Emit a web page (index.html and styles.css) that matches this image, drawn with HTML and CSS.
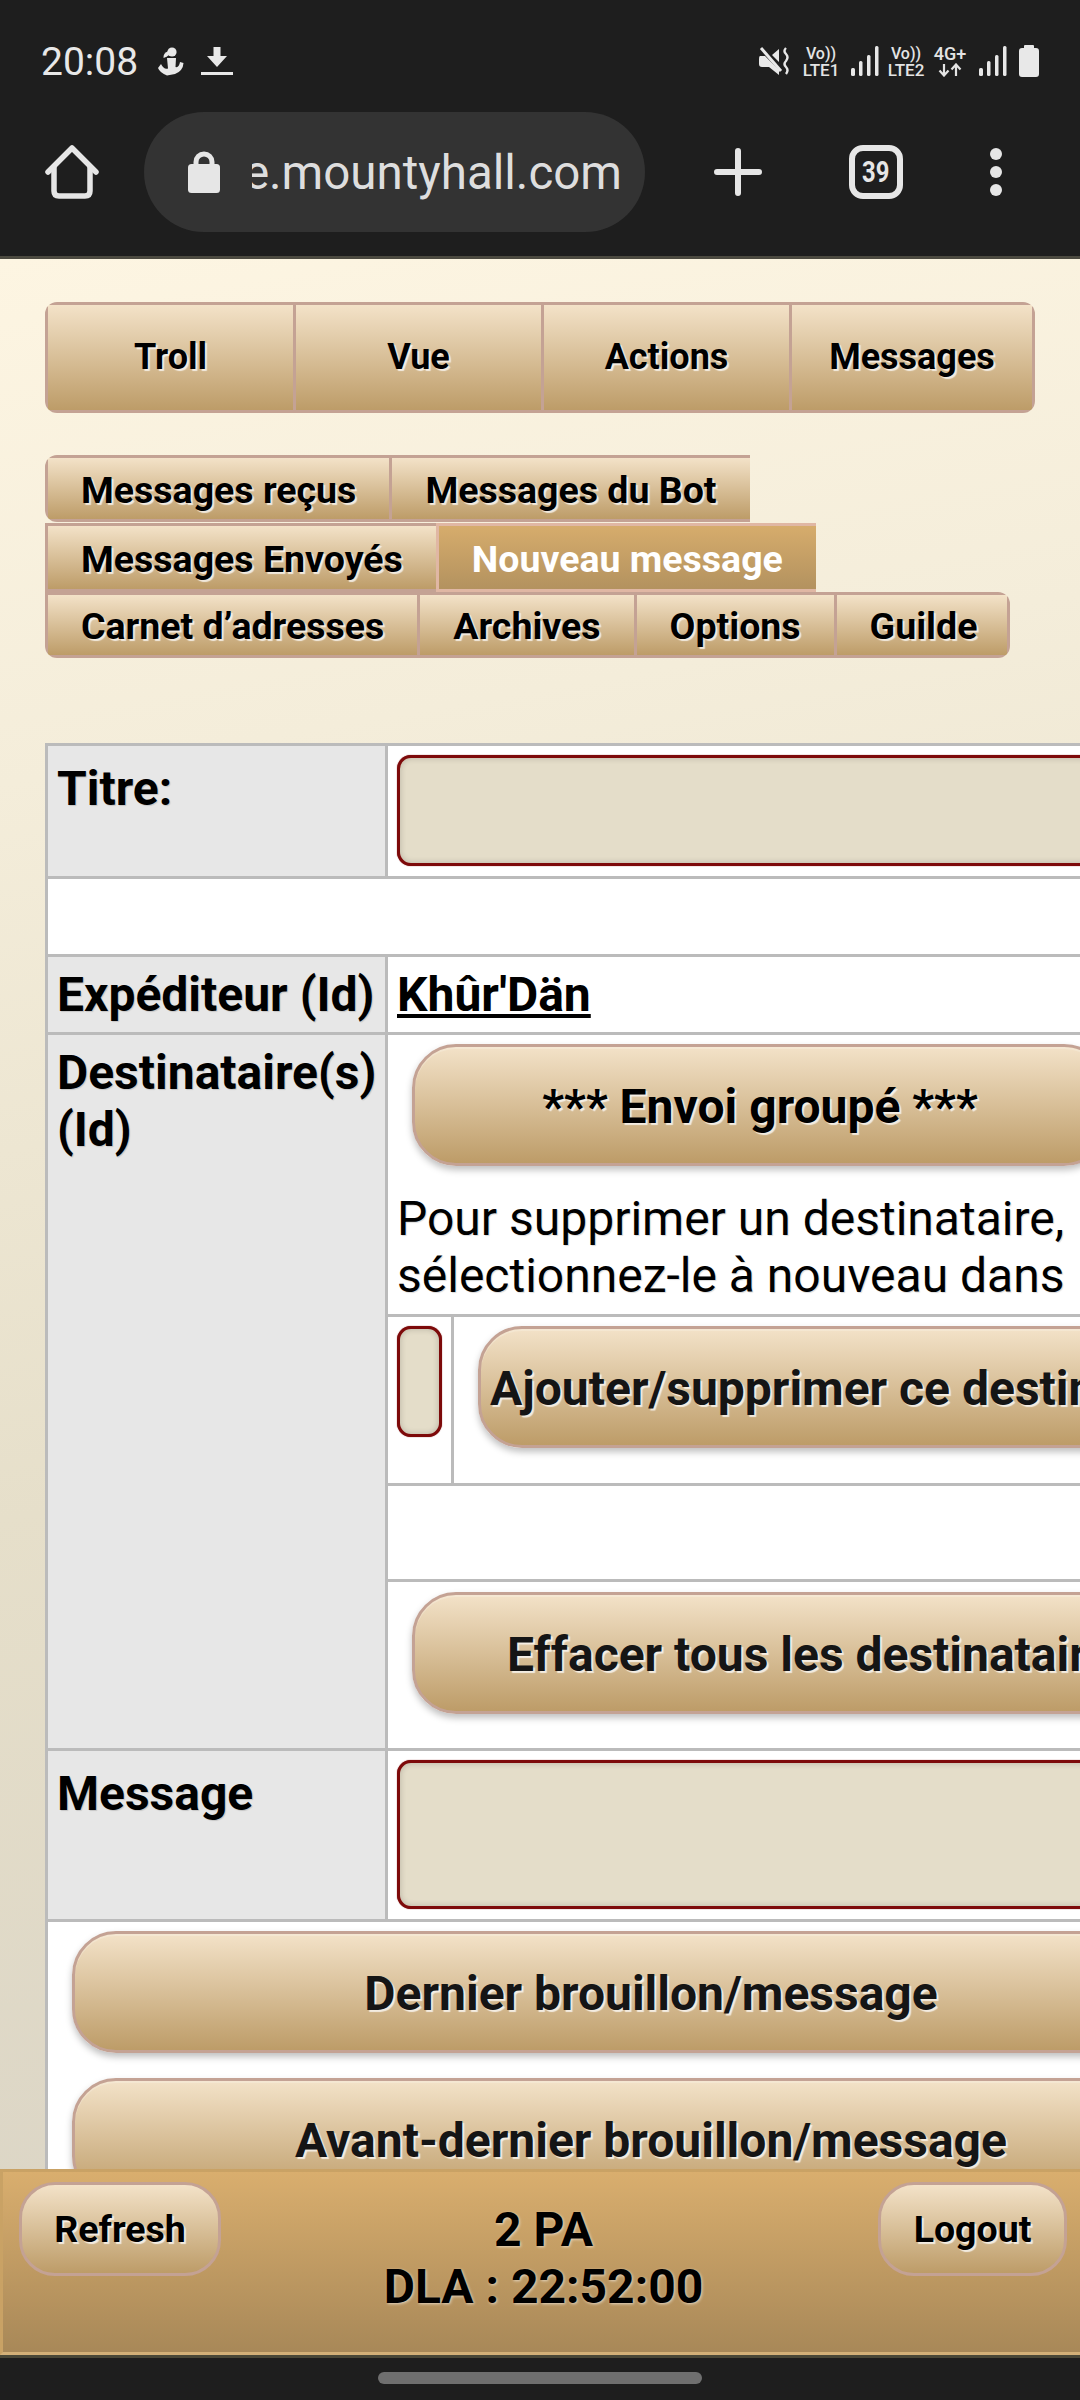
FILE: index.html
```html
<!DOCTYPE html>
<html lang="fr">
<head>
<meta charset="utf-8">
<title>Nouveau message</title>
<link rel="stylesheet" href="styles.css">
</head>
<body>
<header class="chrome">
  <div class="status">
    <span class="time">20:08</span>
    <svg class="ic-fig" viewBox="0 0 26 29" width="26" height="29"><circle cx="14" cy="5" r="4.600" fill="#e8e8e8"/><path d="M10.500 4 Q5 6 5.500 11 Q9 10 11 8Z" fill="#e8e8e8"/><path d="M9 11 H18 L17.500 20 Q21 21 22 15 L25.500 16 Q25 24 17 27 L9 28.500 Q2 26 0 21 L3 17 Q6 23 10 21.500Z" fill="#e8e8e8"/></svg>
    <svg class="ic-dl" viewBox="0 0 32 28" width="32" height="28"><path d="M12.500 0 H19.500 V9 H26 L16 20 L6 9 H12.500Z" fill="#e8e8e8"/><rect y="25" width="32" height="3" fill="#e8e8e8"/></svg>
    <span class="status-right">
      <svg class="ic-mute" viewBox="0 0 30 28" width="30" height="28"><path d="M1 9 H6 L20 23 V28 L10 20 H3 Q0 20 0 17 V12 Q0 9 1 9Z M13 8 L20 2 V15Z" fill="#e8e8e8"/><path d="M2 1 L22 24" stroke="#e8e8e8" stroke-width="3"/><path d="M27 1 Q24 4 27 7 Q30 10 27 14 Q24 17 27 20 Q30 23 27 27" fill="none" stroke="#e8e8e8" stroke-width="2.400"/></svg>
      <span class="net net-a"><span class="net-top">Vo))</span><span>LTE1</span></span>
      <svg class="ic-sig" viewBox="0 0 28 30" width="28" height="30"><rect x="0" y="22" width="4" height="8" rx="1.500" fill="#e8e8e8"/><rect x="8" y="15" width="3.500" height="15" rx="1.500" fill="#e8e8e8"/><rect x="16" y="9" width="3.500" height="21" rx="1.500" fill="#e8e8e8"/><rect x="24" y="0" width="3.500" height="30" rx="1.500" fill="#e8e8e8"/></svg>
      <span class="net net-b"><span class="net-top">Vo))</span><span>LTE2</span></span>
      <span class="net net-c"><span>4G+</span><svg class="ic-arrows" viewBox="0 0 24 14" width="24" height="14"><path d="M6 1 V12 M1.500 7.500 L6 12.500 L10.500 7.500 M18 13 V2 M13.500 6.500 L18 1.500 L22.500 6.500" fill="none" stroke="#e4e4e4" stroke-width="2.200"/></svg></span>
      <svg class="ic-sig2" viewBox="0 0 28 30" width="28" height="30"><rect x="0" y="22" width="4" height="8" rx="1.500" fill="#e8e8e8"/><rect x="8" y="15" width="3.500" height="15" rx="1.500" fill="#e8e8e8"/><rect x="16" y="9" width="3.500" height="21" rx="1.500" fill="#e8e8e8"/><rect x="24" y="0" width="3.500" height="30" rx="1.500" fill="#e8e8e8"/></svg>
      <svg class="ic-bat" viewBox="0 0 20 32" width="20" height="32"><path d="M6 0 H14 Q15 0 15 1 V3 H17 Q20 3 20 6 V29 Q20 32 17 32 H3 Q0 32 0 29 V6 Q0 3 3 3 H5 V1 Q5 0 6 0Z" fill="#e8e8e8"/></svg>
    </span>
  </div>
  <div class="toolbar">
    <svg class="ic-home" viewBox="0 0 54 54" width="54" height="54"><path d="M3 27 L27 3 L51 27" fill="none" stroke="#e6e6e6" stroke-width="5.500" stroke-linecap="round" stroke-linejoin="round"/><path d="M9 22 V46 Q9 51 14 51 H40 Q45 51 45 46 V22" fill="none" stroke="#e6e6e6" stroke-width="5.500"/></svg>
    <div class="pill">
      <svg class="ic-lock" viewBox="0 0 32 42" width="32" height="42"><path d="M8 16 V11 A8 8 0 0 1 24 11 V16" fill="none" stroke="#e6e6e6" stroke-width="5"/><rect y="13" width="32" height="29" rx="3.500" fill="#e6e6e6"/></svg>
      <div class="url"><span>e.mountyhall.com</span></div>
    </div>
    <svg class="ic-plus" viewBox="0 0 48 48" width="48" height="48"><path d="M24 3 V45 M3 24 H45" stroke="#e6e6e6" stroke-width="6" stroke-linecap="round"/></svg>
    <div class="tabcount"><span>39</span></div>
    <svg class="ic-dots" viewBox="0 0 12 48" width="12" height="48"><circle cx="6" cy="6" r="6" fill="#e6e6e6"/><circle cx="6" cy="24" r="6" fill="#e6e6e6"/><circle cx="6" cy="42" r="6" fill="#e6e6e6"/></svg>
  </div>
</header>

<main class="page">
  <nav class="nav">
    <a class="nav-item">Troll</a>
    <a class="nav-item">Vue</a>
    <a class="nav-item">Actions</a>
    <a class="nav-item">Messages</a>
  </nav>

  <div class="tabs">
    <div class="tabrow row-one">
      <a class="tab">Messages reçus</a>
      <a class="tab">Messages du Bot</a>
    </div>
    <div class="tabrow row-two">
      <a class="tab">Messages Envoyés</a>
      <a class="tab tab-active">Nouveau message</a>
    </div>
    <div class="tabrow row-three">
      <a class="tab">Carnet d’adresses</a>
      <a class="tab">Archives</a>
      <a class="tab">Options</a>
      <a class="tab">Guilde</a>
    </div>
  </div>

  <table class="form">
    <colgroup><col class="col-label"><col class="col-value"></colgroup>
    <tr>
      <th class="label label-low">Titre:</th>
      <td class="pad"><input class="field field-title" type="text"></td>
    </tr>
    <tr><td class="blank" colspan="2"></td></tr>
    <tr>
      <th class="label">Expéditeur (Id)</th>
      <td class="sender"><a class="sender-link">Khûr'Dän</a></td>
    </tr>
    <tr>
      <th class="label" rowspan="4">Destinataire(s) (Id)</th>
      <td class="recipients">
        <button class="btn btn-group" type="button">*** Envoi groupé ***</button>
        <p class="hint">Pour supprimer un destinataire,<br>sélectionnez-le à nouveau dans</p>
      </td>
    </tr>
    <tr>
      <td class="picker-cell">
        <div class="picker">
          <div class="picker-input"><input class="field field-id" type="text"></div>
          <div class="picker-action"><button class="btn btn-add" type="button">Ajouter/supprimer ce destinataire</button></div>
        </div>
      </td>
    </tr>
    <tr><td class="blank-sub"></td></tr>
    <tr>
      <td class="clear-cell"><button class="btn btn-clear" type="button">Effacer tous les destinataires</button></td>
    </tr>
    <tr>
      <th class="label label-low">Message</th>
      <td class="pad"><textarea class="field field-message"></textarea></td>
    </tr>
    <tr>
      <td class="drafts" colspan="2">
        <button class="btn btn-draft" type="button">Dernier brouillon/message</button>
        <button class="btn btn-draft" type="button">Avant-dernier brouillon/message</button>
      </td>
    </tr>
  </table>
</main>

<footer class="bar">
  <button class="bar-btn bar-refresh" type="button">Refresh</button>
  <div class="bar-info">2 PA<br>DLA : 22:52:00</div>
  <button class="bar-btn bar-logout" type="button">Logout</button>
</footer>
<div class="gesture"><span class="gesture-pill"></span></div>
</body>
</html>
```

FILE: styles.css
```css
* { box-sizing: border-box; }
html, body { margin: 0; padding: 0; }
body {
  width: 1080px;
  height: 2400px;
  overflow: hidden;
  display: flex;
  flex-direction: column;
  font-family: Roboto, "Liberation Sans", sans-serif;
  color: #000;
  background: #1e1e1e;
}

/* Browser chrome */
.chrome {
  height: 259px;
  flex: none;
  background: #1e1e1e;
  border-bottom: 3px solid #4c4a40;
  color: #e8e8e8;
}
.status {
  height: 112px;
  display: flex;
  align-items: flex-start;
  padding: 39px 0 0 41px;
}
.time { font-size: 39px; line-height: 46px; width: 98px; }
.ic-fig { margin: 8px 0 0 19px; }
.ic-dl { margin: 8px 0 0 17px; }
.status-right {
  display: flex;
  align-items: flex-start;
  margin-left: 526px;
  padding-top: 6px;
}
.ic-mute { margin-top: 2px; }
.net {
  display: flex;
  flex-direction: column;
  align-items: center;
  font-size: 17px;
  line-height: 17px;
  font-weight: 500;
  color: #e4e4e4;
  white-space: nowrap;
}
.net-top { font-size: 16px; }
.net-a { width: 38px; margin-left: 13px; }
.ic-sig { margin-left: 11px; margin-top: 1px; }
.net-b { width: 40px; margin-left: 7px; }
.net-c { width: 34px; margin-left: 7px; font-size: 18px; }
.ic-arrows { margin-top: 1px; }
.ic-sig2 { margin-left: 12px; margin-top: 1px; }
.ic-bat { margin-left: 12px; }

.toolbar {
  height: 120px;
  display: flex;
  align-items: center;
  padding-left: 45px;
}
.pill {
  width: 501px;
  height: 120px;
  margin-left: 45px;
  border-radius: 60px;
  background: #333;
  display: flex;
  align-items: center;
  flex: none;
}
.ic-lock { margin-left: 44px; flex: none; }
.url {
  width: 370px;
  margin-left: 32px;
  padding-top: 2px;
  display: flex;
  justify-content: flex-end;
  overflow: hidden;
  font-size: 47.500px;
  line-height: 56px;
  color: #dedede;
  white-space: nowrap;
}
.url span { flex: none; }
.ic-plus { margin-left: 69px; flex: none; }
.tabcount {
  width: 54px;
  height: 54px;
  margin-left: 87px;
  flex: none;
  border: 6px solid #e6e6e6;
  border-radius: 14px;
  display: flex;
  align-items: center;
  justify-content: center;
  font-size: 29px;
  font-weight: 700;
  color: #e6e6e6;
}
.tabcount span { display: block; transform: scaleX(.82); }
.ic-dots { margin-left: 87px; flex: none; }

/* Page */
.page {
  height: 1910px;
  flex: none;
  overflow: hidden;
  padding: 43px 0 0 45px;
  background: linear-gradient(170deg, #fdf5e2 0%, #f4edda 25%, #e6dfca 60%, #dad4c5 100%);
}

.nav {
  width: 990px;
  height: 111px;
  display: flex;
  border-radius: 12px;
  overflow: hidden;
}
.nav-item {
  flex: none;
  width: 248px;
  display: flex;
  align-items: center;
  justify-content: center;
  font-size: 36px;
  font-weight: 700;
  text-shadow: 2px 2px 1px rgba(255, 255, 255, .75);
  background: linear-gradient(#f3e2c8, #bd9c68);
  border: solid #c4a294;
  border-width: 3px 0 3px 3px;
  padding-bottom: 2px;
}
.nav-item:last-child { flex: 1; width: auto; border-right-width: 3px; }

.tabs { margin-top: 42px; }
.tabrow { display: flex; width: max-content; overflow: hidden; }
.row-one { height: 67px; border-radius: 12px 0 0 12px; }
.row-two { height: 69px; margin-top: 1px; }
.row-three { height: 66px; border-radius: 0 12px 12px 12px; }
.tab {
  display: flex;
  align-items: center;
  padding: 2px 33px 0;
  font-size: 37.500px;
  font-weight: 700;
  white-space: nowrap;
  text-shadow: 2px 2px 1px rgba(255, 255, 255, .75);
  background: linear-gradient(#f3e2c8, #bd9c68);
  border: solid #c4a294;
  border-width: 3px 0 3px 3px;
}
.tab:last-child { border-right-width: 0; }
.row-three .tab:last-child { border-right-width: 3px; padding-right: 30px; }
.tab-active {
  color: #fff;
  text-shadow: none;
  background: linear-gradient(#d6ac6c, #b3925f);
  border: 3px solid #e0b7a4;
  border-right-width: 0;
}

/* Form table */
.form {
  width: 1214px;
  margin-top: 85px;
  table-layout: fixed;
  border-collapse: separate;
  border-spacing: 3px;
  background: #bbb;
}
.col-label { width: 337px; }
.form th, .form td { padding: 0; vertical-align: top; background: #fff; }
.form th.label {
  background: #e7e7e7;
  text-align: left;
  font-size: 48px;
  line-height: 57px;
  font-weight: 700;
  padding: 9px 0 0 9px;
  text-shadow: 1px 1px 1px rgba(0, 0, 0, .15);
}
.form th.label-low { padding-top: 14px; }
.form td.pad { padding: 9px 9px 10px; }
.form td.blank { height: 75px; }
.form td.sender { padding: 9px; height: 75px; }
.sender-link {
  font-size: 48px;
  line-height: 57px;
  font-weight: 700;
  color: #000;
  text-decoration: underline;
}
.form td.recipients { padding: 9px 0 10px 9px; }
.hint {
  margin: 24px 0 0;
  font-size: 48px;
  line-height: 57px;
  white-space: nowrap;
  text-shadow: 1px 1px 1px rgba(0, 0, 0, .15);
}
.form td.picker-cell { height: 166px; }
.picker { display: flex; height: 166px; }
.picker-input {
  width: 66px;
  flex: none;
  padding: 9px 0 0 9px;
  border-right: 3px solid #bbb;
}
.picker-action { padding: 9px 0 0 24px; }
.form td.blank-sub { height: 93px; }
.form td.clear-cell { padding: 10px 0 0 24px; height: 166px; }
.form td.drafts { padding: 9px 0 0 24px; height: 400px; }

.field {
  display: block;
  margin: 0;
  padding: 0;
  background: #e4ddc9;
  border: 3px solid #7d0a0a;
  border-radius: 14px;
  box-shadow: inset 0 0 6px rgba(0, 0, 0, .2), 0 0 1px #7d0a0a;
  outline: 0;
  resize: none;
}
.field-title { width: 845px; height: 111px; }
.field-id { width: 45px; height: 111px; }
.field-message { width: 845px; height: 149px; }

.btn {
  display: block;
  height: 122px;
  margin: 0;
  padding: 2px 9px 0;
  border: 3px solid #c4a294;
  border-radius: 44px;
  font-family: Roboto, "Liberation Sans", sans-serif;
  font-size: 48px;
  font-weight: 700;
  color: #151515;
  white-space: nowrap;
  text-align: center;
  text-shadow: 2px 2px 1px rgba(255, 255, 255, .75);
  background: linear-gradient(#f3e2c8, #bd9c68);
  box-shadow: 0 4px 7px rgba(0, 0, 0, .25), inset 0 2px 0 rgba(255, 255, 255, .2);
}
.btn-group { width: 696px; margin-left: 15px; color: #000; }
.btn-add { width: 750px; }
.btn-clear { width: 820px; }
.btn-draft { width: 1158px; margin-bottom: 25px; }

/* Bottom bar */
.bar {
  height: 186px;
  flex: none;
  display: flex;
  align-items: flex-start;
  padding: 10px 13px 0 16px;
  border: solid #c9a265;
  border-width: 3px 0 3px 3px;
  border-bottom-color: #d3b078;
  background: linear-gradient(#d9ae6e, #a88858);
}
.bar-btn {
  height: 94px;
  flex: none;
  padding: 0;
  border: 3px solid #c4a294;
  border-radius: 36px;
  font-family: Roboto, "Liberation Sans", sans-serif;
  font-size: 37.500px;
  font-weight: 700;
  color: #000;
  text-shadow: 2px 2px 1px rgba(255, 255, 255, .75);
  background: linear-gradient(#f3e2c8, #bd9c68);
}
.bar-refresh { width: 202px; }
.bar-logout { width: 189px; }
.bar-info {
  flex: 1;
  padding: 19px 12px 0 0;
  text-align: center;
  font-size: 48px;
  line-height: 57px;
  font-weight: 700;
  color: #000;
  text-shadow: 1px 1px 3px rgba(255, 255, 255, .6);
}

.gesture {
  flex: 1;
  background: #1e1e1e;
  border-top: 3px solid #4a4838;
  padding-top: 14px;
  display: flex;
  justify-content: center;
}
.gesture-pill {
  width: 324px;
  height: 12px;
  border-radius: 6px;
  background: #6f6f6f;
}
```
